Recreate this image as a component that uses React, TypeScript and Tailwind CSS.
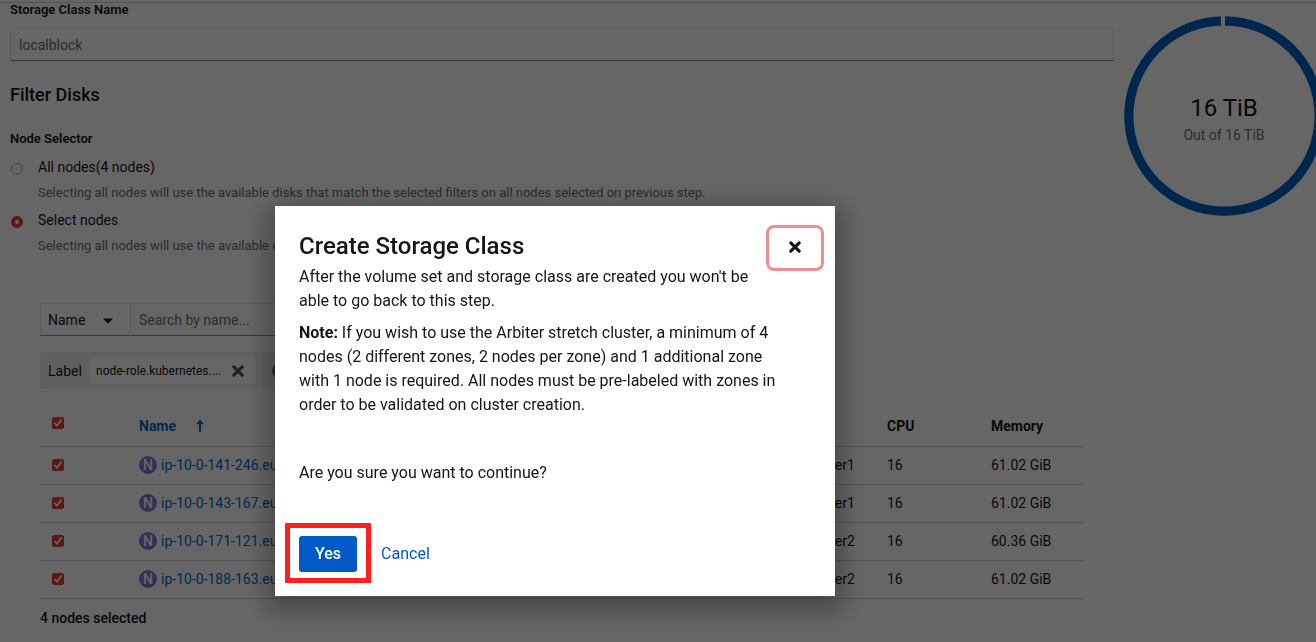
import type { ReactNode } from 'react';

const nodes = [
  { name: 'ip-10-0-141-246.eu', zone: 'datacenter1', cpu: 16, memory: '61.02 GiB' },
  { name: 'ip-10-0-143-167.eu', zone: 'datacenter1', cpu: 16, memory: '61.02 GiB' },
  { name: 'ip-10-0-171-121.eu-', zone: 'datacenter2', cpu: 16, memory: '60.36 GiB' },
  { name: 'ip-10-0-188-163.eu', zone: 'datacenter2', cpu: 16, memory: '61.02 GiB' },
];

function CloseGlyph({ className }: { className: string }) {
  return (
    <svg viewBox="0 0 12 12" className={className} aria-hidden="true">
      <path d="M2.4 2.4 9.6 9.6M9.6 2.4 2.4 9.6" stroke="currentColor" strokeWidth="2.7" strokeLinecap="round" />
    </svg>
  );
}

function Checkbox({ label }: { label: string }) {
  return (
    <label className="grid size-3 place-items-center">
      <input
        type="checkbox"
        defaultChecked
        aria-label={label}
        className="col-start-1 row-start-1 size-3 appearance-none rounded-xs border border-[#d8403a] bg-[#e83a32]"
      />
      <svg viewBox="0 0 12 12" className="pointer-events-none z-0 col-start-1 row-start-1 size-3" aria-hidden="true">
        <path d="M2.8 6.4 5 8.8 9.2 3" fill="none" stroke="white" strokeWidth="1.6" strokeLinecap="round" strokeLinejoin="round" />
      </svg>
    </label>
  );
}

function RadioOption({ id, label, help, checked = false }: { id: string; label: ReactNode; help: string; checked?: boolean }) {
  return (
    <div className="flex gap-[15px]">
      <input
        type="radio"
        id={id}
        name="node-selector"
        defaultChecked={checked}
        className="mt-1.5 ml-px size-3 shrink-0 appearance-none rounded-full border border-[#acacac] bg-white checked:border-4 checked:border-[#e83a32]"
      />
      <div className="flex flex-col gap-1.5">
        <label htmlFor={id} className="text-sm leading-5">
          {label}
        </label>
        <p className="text-[13px] leading-5 text-[#6a6e73]">{help}</p>
      </div>
    </div>
  );
}

function CapacityRing() {
  return (
    <div className="grid size-[200px] shrink-0 place-items-center">
      <svg viewBox="0 0 200 200" className="col-start-1 row-start-1 size-[200px]" aria-hidden="true">
        <circle cx="100" cy="100" r="95.2" fill="none" stroke="#0060c4" strokeWidth="9.2" />
        <path d="M99 0V12" stroke="white" strokeWidth="4" />
      </svg>
      <div className="col-start-1 row-start-1 flex flex-col items-center pt-2">
        <span className="text-2xl leading-[30px]">16 TiB</span>
        <span className="text-sm leading-6 text-[#6a6e73]">Out of 16 TiB</span>
      </div>
    </div>
  );
}

function Dialog() {
  return (
    <div className="fixed inset-0 z-10 flex items-center justify-center bg-black/60 pt-[160px] pr-[206px]">
      <section
        role="dialog"
        aria-modal="true"
        aria-labelledby="dialog-title"
        className="w-full max-w-[560px] bg-white pt-5 pr-[11px] pb-6 pl-6 shadow-[0_8px_24px_8px_rgba(0,0,0,0.3)]"
      >
        <header className="flex h-9 items-start justify-between">
          <h1 id="dialog-title" className="pt-1 text-2xl leading-8 font-medium">
            Create Storage Class
          </h1>
          <button
            type="button"
            aria-label="Close"
            className="-mt-px flex h-[46px] w-[58px] shrink-0 items-center justify-center rounded-lg border-3 border-[#ec8f92] pb-0.5"
          >
            <CloseGlyph className="size-3.5" />
          </button>
        </header>
        <div className="mt-[3px] max-w-[480px]">
          <p className="max-w-[464px]">After the volume set and storage class are created you won't be able to go back to this step.</p>
          <p className="mt-2">
            <strong>Note: </strong>If you wish to use the Arbiter stretch cluster, a minimum of 4 nodes (2 different zones, 2 nodes per
            zone) and 1 additional zone with 1 node is required. All nodes must be pre-labeled with zones in order to be validated on
            cluster creation.
          </p>
          <p className="mt-11">Are you sure you want to continue?</p>
        </div>
        <div className="mt-[51px] flex items-center gap-6">
          <div className="relative">
            <button type="button" className="block h-9 rounded-[3px] bg-[#0059c5] px-4 font-medium text-white">
              Yes
            </button>
            <span className="pointer-events-none absolute -inset-x-3.5 -top-[13px] -bottom-[11px] border-5 border-[#ff201b]" />
          </div>
          <button type="button" className="text-[#0059c5]">
            Cancel
          </button>
        </div>
      </section>
    </div>
  );
}

export default function App() {
  return (
    <div className="h-screen overflow-hidden bg-white pt-0.5 font-[Roboto,sans-serif] text-base leading-6 text-[#151515]">
      <div className="flex gap-2.5 border-t border-[#d2d2d2] pl-2.5">
        <main className="min-w-0 flex-1">
          <label htmlFor="class-name" className="block text-[13px] leading-3.5 font-semibold">
            Storage Class Name
          </label>
          <input
            id="class-name"
            placeholder="localblock"
            className="mt-[11px] block h-[33px] w-full border border-[#e8e8e8] border-b-[#8a8d90] px-2 text-sm placeholder:text-[#6a6e73]"
          />
          <h2 className="mt-[22px] text-lg leading-6 font-medium">Filter Disks</h2>
          <fieldset className="mt-[22px]">
            <legend className="text-[13px] leading-5 font-semibold">Node Selector</legend>
            <div className="mt-2 flex flex-col gap-[7px]">
              <RadioOption
                id="all-nodes"
                label="All nodes(4 nodes)"
                help="Selecting all nodes will use the available disks that match the selected filters on all nodes selected on previous step."
              />
              <RadioOption id="select-nodes" label="Select nodes" help="Selecting all nodes will use the available disks" checked />
            </div>
          </fieldset>

          <div className="mt-[47px] mr-[30px] ml-[30px]">
            <div className="flex h-[33px] max-w-[420px] text-sm">
              <button type="button" className="flex w-[91px] items-center justify-between border border-[#e8e8e8] border-b-[#8a8d90] pr-[17px] pl-[7px]">
                Name
                <svg viewBox="0 0 10 6" className="mt-0.5 h-1.5 w-2.5" aria-hidden="true">
                  <path d="M1 .5h8q.8 0 .3.7L5.6 5.1q-.6.6-1.2 0L.7 1.2Q.2.5 1 .5Z" fill="currentColor" />
                </svg>
              </button>
              <input
                aria-label="Search by name"
                placeholder="Search by name..."
                className="min-w-0 flex-1 border border-l-0 border-[#e8e8e8] border-b-[#8a8d90] px-2 placeholder:text-[#6a6e73]"
              />
            </div>

            <div className="mt-4 flex h-[37px] w-64 items-center rounded-[3px] bg-[#f0f0f0] pl-2 text-sm">
              <span className="w-[41px]">Label</span>
              <span className="flex h-[27px] w-[167px] items-center gap-2.5 rounded-[3px] bg-white pl-[7px] text-xs">
                node-role.kubernetes....
                <button type="button" aria-label="Remove label filter" className="text-[#4f5255]">
                  <CloseGlyph className="size-3.5" />
                </button>
              </span>
              <button type="button" aria-label="Clear label filters" className="ml-4 text-[#6a6e73]">
                <svg viewBox="0 0 16 16" className="size-4" aria-hidden="true">
                  <circle cx="8" cy="8" r="8" fill="currentColor" />
                  <path d="m5 5 6 6M11 5l-6 6" stroke="white" strokeWidth="2" />
                </svg>
              </button>
            </div>

            <table className="w-full table-fixed border-collapse text-left text-sm leading-5">
              <colgroup>
                <col className="w-[99px]" />
                <col />
                <col className="w-[107px]" />
                <col className="w-[104px]" />
                <col className="w-[93px]" />
              </colgroup>
              <thead>
                <tr className="h-[57px] border-b border-[#d2d2d2]">
                  <th className="pt-3 pl-3 align-middle">
                    <Checkbox label="Select all nodes" />
                  </th>
                  <th className="pt-[18px]">
                    <button type="button" className="flex items-center gap-5 font-bold text-[#0066cc]">
                      Name
                      <svg viewBox="0 0 8 14" className="h-3.5 w-2" aria-hidden="true">
                        <path d="M4 13V4" stroke="currentColor" strokeWidth="2" />
                        <path d="M4 .8 7.4 4.2 6.4 5.2H1.6L.6 4.2Z" fill="currentColor" />
                      </svg>
                    </button>
                  </th>
                  <th className="pt-[18px]">Zone</th>
                  <th className="pt-[18px]">CPU</th>
                  <th className="pt-[18px]">Memory</th>
                </tr>
              </thead>
              <tbody>
                {nodes.map((n) => (
                  <tr key={n.name} className="h-[38px] border-b border-[#d2d2d2]">
                    <td className="pl-3">
                      <Checkbox label={'Select ' + n.name} />
                    </td>
                    <td>
                      <span className="flex items-center gap-1">
                        <span className="flex size-[18px] items-center justify-center rounded-full bg-[#8476d1] text-sm font-medium text-white">N</span>
                        <a href="#node" className="text-[#0066cc]">
                          {n.name}
                        </a>
                      </span>
                    </td>
                    <td>{n.zone}</td>
                    <td>{n.cpu}</td>
                    <td>{n.memory}</td>
                  </tr>
                ))}
              </tbody>
            </table>
            <p className="mt-[9px] text-sm leading-5 font-medium">4 nodes selected</p>
          </div>
        </main>
        <aside className="w-48 shrink-0 overflow-hidden pt-[13px]">
          <CapacityRing />
        </aside>
      </div>
      <Dialog />
    </div>
  );
}
